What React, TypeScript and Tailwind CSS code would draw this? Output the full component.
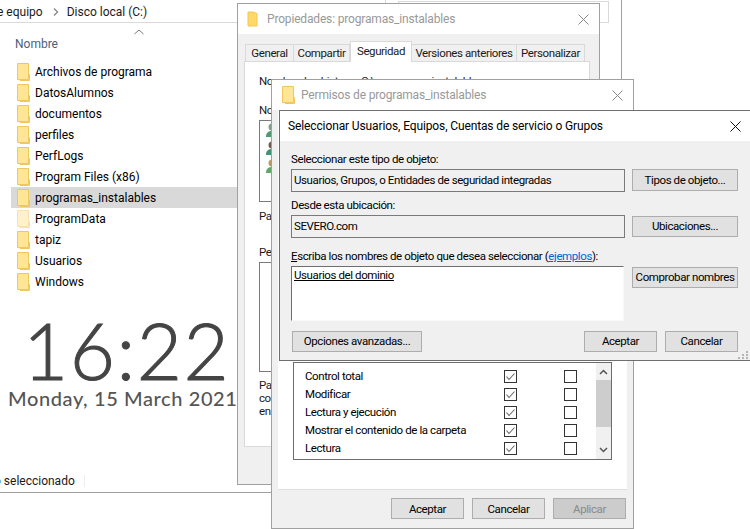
const folders = [
    'Archivos de programa',
    'DatosAlumnos',
    'documentos',
    'perfiles',
    'PerfLogs',
    'Program Files (x86)',
    'programas_instalables',
    'ProgramData',
    'tapiz',
    'Usuarios',
    'Windows',
];

const permissions = ['Control total', 'Modificar', 'Lectura y ejecución', 'Mostrar el contenido de la carpeta', 'Lectura', 'Escritura'];

function Folder({ faded = false }: { faded?: boolean }) {
    return (
        <svg width="14" height="18" viewBox="0 0 14 18" className={faded ? 'shrink-0 opacity-50' : 'shrink-0'}>
            <path d="M0.5 0.5H11.5V16.5H0.5Z" fill="#ffe596" stroke="#f0c75e" />
            <path d="M11.5 11.5H12.5V17.5H3" fill="none" stroke="#f0c75e" />
        </svg>
    );
}

function CloseIcon({ color }: { color: string }) {
    return (
        <svg width="11" height="11" viewBox="0 0 11 11" className="shrink-0">
            <path d="M0.5 0.5L10.5 10.5M10.5 0.5L0.5 10.5" fill="none" stroke={color} />
        </svg>
    );
}

function Btn({ label, className = '', disabled = false }: { label: string; className?: string; disabled?: boolean }) {
    return (
        <div className={`flex shrink-0 items-center justify-center border border-[#adadad] ${disabled ? 'bg-[#cccccc] text-[#8a8a8a]' : 'bg-[#e1e1e1] text-black'} ${className}`}>
            {label}
        </div>
    );
}

function UserIcon({ head, body }: { head: string; body: string }) {
    return (
        <svg width="14" height="16" viewBox="0 0 14 16" className="shrink-0">
            <circle cx="7" cy="5" r="3.5" fill={head} />
            <path d="M1 15C1 10 4 9 7 9C10 9 13 10 13 15Z" fill={body} />
        </svg>
    );
}

function CheckMark() {
    return (
        <svg width="11" height="11" viewBox="0 0 11 11">
            <path d="M1.5 5.5L4 8.5L9.5 2.5" fill="none" stroke="#666666" strokeWidth="1.1" />
        </svg>
    );
}

export default function App() {
    return (
        <div className="relative h-[529px] w-[750px] overflow-hidden bg-white font-['Roboto',sans-serif] text-[12px] leading-[16px] text-black">
            {/* Explorer behind */}
            <div className="absolute left-0 top-0 flex h-[493px] w-[622px] flex-col border-b border-r border-[#a0a0a0]">
                <div className="flex h-[23px] shrink-0">
                    <div className="flex w-[386px] items-center border-b border-r border-[#d9d9d9] pt-[2px] text-[#1a1a1a]">
                        <span className="ml-[-3px]">e equipo</span>
                        <svg width="6" height="8" viewBox="0 0 6 8" className="ml-[10px] mr-[8px]">
                            <path d="M1 0.5L4.5 4L1 7.5" fill="none" stroke="#8a8a8a" strokeWidth="1.4" />
                        </svg>
                        <span>Disco local (C:)</span>
                    </div>
                    <div className="ml-[12px] mt-[1px] w-[211px] border border-[#d9d9d9]" />
                </div>
                <div className="flex h-[29px] w-[238px] shrink-0 flex-col">
                    <svg width="10" height="6" viewBox="0 0 10 6" className="ml-[134px] mt-[6px]">
                        <path d="M0.5 5L5 1L9.5 5" fill="none" stroke="#7a7a7a" />
                    </svg>
                    <span className="ml-[15px] mt-[1px] text-[#4c607a]">Nombre</span>
                </div>
                <ul className="mt-[9px] w-[238px] pl-[11px]">
                    {folders.map((name) => (
                        <li key={name} className={`flex h-[21px] items-center gap-[4px] pl-[6px] ${name === 'programas_instalables' ? 'bg-[#d9d9d9]' : ''}`}>
                            <Folder faded={name === 'ProgramData'} />
                            <span>{name}</span>
                        </li>
                    ))}
                </ul>
                <div className="ml-[23px] mt-[18px] font-['Lato',sans-serif] text-[78px] font-light leading-[80px] tracking-[1.5px] text-[#444444] [-webkit-text-stroke:1px_#444444]">16:22</div>
                <div className="ml-[8px] mt-[-4px] whitespace-nowrap font-['Lato',sans-serif] text-[20px] font-medium leading-[24px] tracking-[0.6px] text-[#555555]">Monday, 15 March 2021</div>
                <div className="mt-auto flex h-[23px] items-center">
                    <span className="ml-[-6px] text-[#1a1a1a]">o seleccionado</span>
                    <span className="ml-[9px] h-[12px] border-l border-[#eeeeee]" />
                </div>
            </div>

            {/* Propiedades */}
            <div className="absolute left-[237px] top-[3px] flex h-[482px] w-[363px] flex-col border border-[#a0a0a0] bg-[#f0f0f0] text-[11.5px] tracking-[-0.4px]">
                <div className="flex h-[30px] shrink-0 items-center bg-white pl-[9px] pr-[10px] text-[12px] tracking-[-0.17px] text-[#999999]">
                    <svg width="12" height="16" viewBox="0 0 12 16" className="shrink-0">
                        <path d="M1 1H6L10 2.5V15H1Z" fill="#ffd966" stroke="#efc65c" />
                    </svg>
                    <span className="ml-[8px] flex-1">Propiedades: programas_instalables</span>
                    <CloseIcon color="#888888" />
                </div>
                <div className="ml-[7px] mt-[10px] flex h-[17px] items-end text-[#1a1a1a]">
                    <div className="flex h-[17px] w-[49px] items-center justify-center border border-b-0 border-[#d9d9d9]">General</div>
                    <div className="flex h-[17px] w-[56px] items-center justify-center border-r border-t border-[#d9d9d9]">Compartir</div>
                    <div className="z-10 mb-[-1px] flex h-[21px] w-[62px] items-center justify-center border border-b-0 border-[#d9d9d9] bg-white pb-[2px]">Seguridad</div>
                    <div className="flex h-[17px] w-[105px] items-center justify-center border-r border-t border-[#d9d9d9]">Versiones anteriores</div>
                    <div className="flex h-[17px] w-[68px] items-center justify-center border-r border-t border-[#d9d9d9]">Personalizar</div>
                </div>
                <div className="ml-[6px] mr-[9px] h-[386px] border border-[#d9d9d9] bg-white px-[14px] text-[#1a1a1a]">
                    <div className="mt-[11px] flex whitespace-nowrap">
                        <span className="w-[102px]">Nombre de objeto:</span>
                        <span>C:\programas_instalables</span>
                    </div>
                    <p className="mt-[13px]">Nombres de grupos o usuarios:</p>
                    <div className="mt-[2px] flex h-[82px] flex-col gap-[2px] border border-[#7a7a7a] pl-[5px] pt-[1px]">
                        <UserIcon head="#7f9f8a" body="#4f9a70" />
                        <UserIcon head="#6d5c4c" body="#3f9478" />
                        <UserIcon head="#b59a62" body="#5fa86a" />
                    </div>
                    <p className="mt-[6px]">Para cambiar los permisos</p>
                    <p className="mt-[20px]">Permisos de Usuarios</p>
                    <div className="mt-[2px] h-[110px] border border-[#7a7a7a]" />
                    <p className="mt-[7px] leading-[13px]">Para ver permisos especiales<br />configuración avanzada, haga clic<br />en Opciones avanzadas.</p>
                </div>
            </div>

            {/* Permisos */}
            <div className="absolute left-[271px] top-[79px] flex h-[450px] w-[363px] flex-col border border-[#a0a0a0] bg-[#f0f0f0] text-[11.5px] tracking-[-0.4px]">
                <div className="flex h-[30px] shrink-0 items-center bg-white pl-[10px] pr-[10px] text-[12px] tracking-[-0.17px] text-[#999999]">
                    <Folder />
                    <span className="ml-[5px] flex-1">Permisos de programas_instalables</span>
                    <CloseIcon color="#888888" />
                </div>
                <div className="mx-[6px] flex h-[380px] flex-col justify-end border-b border-[#dfdfdf] bg-white px-[15px] pb-[29px]">
                    <div className="flex h-[98px] overflow-hidden border border-[#6d6d6d]">
                        <div className="flex-1 overflow-hidden pl-[11px] pt-[4px]">
                            {permissions.map((name) => (
                                <div key={name} className="flex h-[18px] items-center">
                                    <span className="w-[199px] shrink-0">{name}</span>
                                    <span className="flex h-[13px] w-[13px] shrink-0 items-center justify-center border border-[#333333]">
                                        <CheckMark />
                                    </span>
                                    <span className="ml-[47px] h-[13px] w-[13px] shrink-0 border border-[#333333]" />
                                </div>
                            ))}
                        </div>
                        <div className="flex w-[15px] shrink-0 flex-col items-center bg-[#f0f0f0]">
                            <svg width="9" height="17" viewBox="0 0 9 17" className="shrink-0">
                                <path d="M1 11L4.5 7.5L8 11" fill="none" stroke="#555555" strokeWidth="1.5" />
                            </svg>
                            <div className="h-[47px] w-full shrink-0 bg-[#cdcdcd]" />
                            <svg width="9" height="17" viewBox="0 0 9 17" className="mt-auto shrink-0">
                                <path d="M1 6L4.5 9.5L8 6" fill="none" stroke="#555555" strokeWidth="1.5" />
                            </svg>
                        </div>
                    </div>
                </div>
                <div className="mr-[7px] mt-[8px] flex justify-end gap-[8px]">
                    <Btn label="Aceptar" className="h-[21px] w-[73px]" />
                    <Btn label="Cancelar" className="h-[21px] w-[73px]" />
                    <Btn label="Aplicar" disabled className="h-[21px] w-[73px]" />
                </div>
            </div>

            {/* Seleccionar */}
            <div className="absolute left-[279px] top-[110px] flex h-[251px] w-[480px] flex-col border border-[#6e6e6e] bg-[#f0f0f0] text-[11.5px] tracking-[-0.4px]">
                <div className="flex h-[30px] shrink-0 items-center bg-white pl-[8px] text-[12px] tracking-[-0.12px]">
                    <span className="w-[442px] shrink-0">Seleccionar Usuarios, Equipos, Cuentas de servicio o Grupos</span>
                    <CloseIcon color="#111111" />
                </div>
                <div className="w-[470px] pl-[11px]">
                    <p className="mt-[10px]">Seleccionar este tipo de objeto:</p>
                    <div className="mt-[2px] flex items-start gap-[7px]">
                        <div className="flex h-[23px] w-[334px] shrink-0 items-center border border-[#7a7a7a] px-[2px] pb-[2px]">Usuarios, Grupos, o Entidades de seguridad integradas</div>
                        <Btn label="Tipos de objeto..." className="h-[22px] w-[106px]" />
                    </div>
                    <p className="mt-[5px]">Desde esta ubicación:</p>
                    <div className="mt-[2px] flex items-start gap-[7px]">
                        <div className="flex h-[23px] w-[334px] shrink-0 items-center border border-[#7a7a7a] px-[2px] pb-[2px]">SEVERO.com</div>
                        <Btn label="Ubicaciones..." className="mt-[1px] h-[21px] w-[106px] pb-[1px]" />
                    </div>
                    <p className="mt-[10px]">
                        <span className="underline">E</span>scriba los nombres de objeto que desea seleccionar (<span className="text-[#0066cc] underline">ejemplos</span>):
                    </p>
                    <div className="mt-[2px] flex items-start gap-[8px]">
                        <div className="h-[55px] w-[333px] shrink-0 border border-[#f8f8f8] border-l-[#6e6e6e] border-t-[#6e6e6e] bg-white px-[2px]">
                            <span className="underline">Usuarios del dominio</span>
                        </div>
                        <Btn label="Comprobar nombres" className="mt-[1px] h-[21px] w-[106px] pb-[1px]" />
                    </div>
                    <div className="mt-[10px] flex gap-[8px]">
                        <Btn label="Opciones avanzadas..." className="ml-[1px] mr-[154px] h-[21px] w-[130px] pb-[2px]" />
                        <Btn label="Aceptar" className="h-[21px] w-[73px] pb-[2px]" />
                        <Btn label="Cancelar" className="h-[21px] w-[73px] pb-[2px]" />
                    </div>
                </div>
            </div>
            <svg width="12" height="10" viewBox="0 0 12 10" className="absolute left-[738px] top-[350px]">
                <g fill="#b5b5b5">
                    <rect x="8" y="1" width="2" height="2" />
                    <rect x="4" y="4" width="2" height="2" />
                    <rect x="8" y="4" width="2" height="2" />
                    <rect x="0" y="7" width="2" height="2" />
                    <rect x="4" y="7" width="2" height="2" />
                    <rect x="8" y="7" width="2" height="2" />
                </g>
            </svg>
        </div>
    );
}
